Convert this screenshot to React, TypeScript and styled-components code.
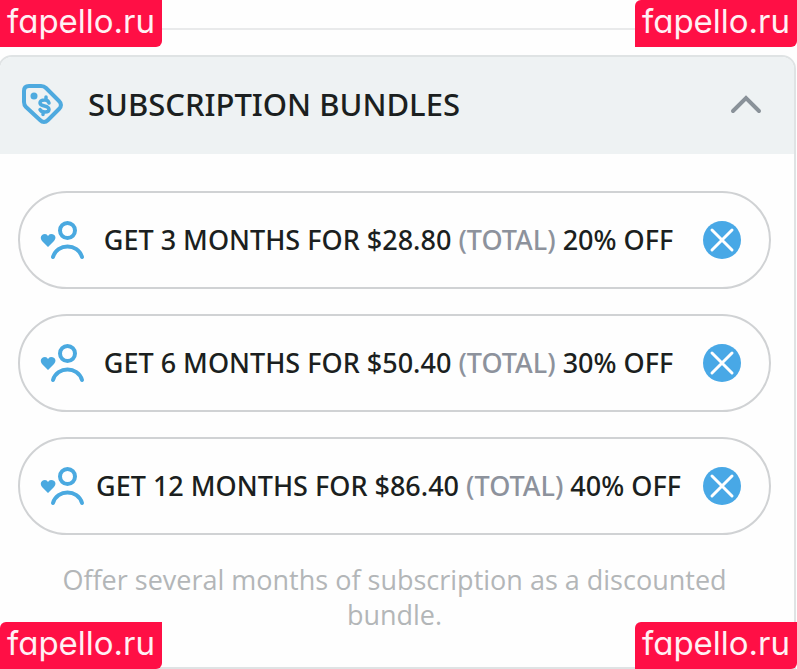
import React from "react";
import styled, { createGlobalStyle } from "styled-components";

const GlobalStyle = createGlobalStyle`
  *, *::before, *::after { box-sizing: border-box; }
  body {
    margin: 0;
    background: #fefefe;
    font-family: "Open Sans", "Noto Sans", sans-serif;
    color: #1b1f20;
    overflow-x: hidden;
  }
`;

const Page = styled.main`
  position: relative;
  overflow: hidden;
`;

const Divider = styled.hr`
  height: 30px;
  margin: 0 0 25px;
  border: 0;
  border-bottom: 2px solid #e9eaeb;
`;

const Panel = styled.section`
  margin: 0 1px 0 -2px;
  border: 2px solid #dfe3e4;
  border-radius: 14px 14px 0 0;
  overflow: hidden;
`;

const PanelHeader = styled.button`
  display: flex;
  align-items: center;
  width: 100%;
  height: 97px;
  padding: 0 32px 4px 21px;
  border: 0;
  background: #eef2f3;
  color: inherit;
  font: inherit;
  text-align: left;
  cursor: pointer;
`;

const PanelTitle = styled.span`
  flex: 1;
  margin-left: 23px;
  font-family: "Noto Sans", "Open Sans", sans-serif;
  font-size: 31px;
  font-weight: 500;
  line-height: 42px;
`;

const PanelBody = styled.div`
  padding: 37px 23px 35px 18px;
`;

const BundleList = styled.ul`
  display: grid;
  gap: 25px;
  margin: 0;
  padding: 0;
  list-style: none;
`;

const BundleRow = styled.li`
  display: flex;
  align-items: center;
  height: 98px;
  padding: 0 28px 0 20px;
  border: 2px solid #d0d2d4;
  border-radius: 49px;
`;

const BundleText = styled.span`
  flex: 1;
  margin-right: 12px;
  font-family: "Noto Sans", "Open Sans", sans-serif;
  font-size: 27px;
  font-weight: 500;
  line-height: 36px;
  text-align: center;
  white-space: nowrap;
`;

const Muted = styled.span`
  color: #8d929c;
`;

const RemoveButton = styled.button`
  display: flex;
  padding: 0;
  border: 0;
  border-radius: 50%;
  background: #48a8e6;
  cursor: pointer;
`;

const Hint = styled.p`
  margin: 27px 40px 0;
  color: #b3b6b8;
  font-size: 27px;
  line-height: 35px;
  text-align: center;
`;

const Badge = styled.a<{ $side: "left" | "right"; $edge: "top" | "bottom" }>`
  position: absolute;
  ${(p) => p.$side}: 0;
  ${(p) => p.$edge}: 0;
  width: 162px;
  height: 47px;
  border-radius: ${(p) => (p.$side === "left" && p.$edge === "top" ? "0 0 6px 0" : "6px 0 6px 0")};
  background: #ff0f45;
  color: #fff0f4;
  font-family: Inter, sans-serif;
  font-feature-settings: "cv11";
  font-size: 33px;
  line-height: 42px;
  text-align: center;
  text-decoration: none;
`;

const TagIcon = () => (
  <svg width="44" height="44" viewBox="0 0 44 44" fill="none" stroke="#4eaadf" strokeLinecap="round" strokeLinejoin="round" aria-hidden="true">
    <path d="M8 4H20Q23 4 25 6L38 19Q42 23 38 27L27 38Q23 42 19 38L5 25Q3 23 3 20V9Q3 4 8 4Z" strokeWidth="4" />
    <circle cx="13" cy="14" r="3.5" fill="#4eaadf" stroke="none" />
    <path d="M28 21Q27 18 24 18Q19 18 19 21Q19 23 23.500 24Q28 25 28 27.500Q28 30 24 30Q20 30 19 27.500M25 15V18M22 30V32.500" strokeWidth="3.500" />
  </svg>
);

const ChevronUp = () => (
  <svg width="32" height="20" viewBox="0 0 32 20" fill="none" stroke="#8a9299" strokeWidth="4" strokeLinecap="round" aria-hidden="true">
    <path d="M3 17L16 4L29 17" />
  </svg>
);

const SubscriberIcon = () => (
  <svg width="46" height="40" viewBox="0 0 46 40" fill="none" aria-hidden="true">
    <path d="M8 27L2 21C-1 17 2 14 5 14Q7 14 8 16Q9 14 11 14C15 14 17 17 14 21Z" fill="#4aa9e0" />
    <circle cx="27.500" cy="10.500" r="7.500" stroke="#4aa9e0" strokeWidth="4" />
    <path d="M13 37C17 23 38 23 42 37" stroke="#4aa9e0" strokeWidth="4" strokeLinecap="round" />
  </svg>
);

const CrossIcon = () => (
  <svg width="38" height="38" viewBox="0 0 38 38" fill="none" stroke="#fff" strokeWidth="3" strokeLinecap="round" aria-hidden="true">
    <path d="M9 9L29 29M29 9L9 29" />
  </svg>
);

const bundles = [
  { months: 3, price: "$28.80", discount: 20 },
  { months: 6, price: "$50.40", discount: 30 },
  { months: 12, price: "$86.40", discount: 40 },
];

export default function App() {
  const [open, setOpen] = React.useState(true);
  const [items, setItems] = React.useState(bundles);

  return (
    <Page>
      <GlobalStyle />
      <Divider />
      <Panel>
        <PanelHeader type="button" aria-expanded={open} onClick={() => setOpen(!open)}>
          <TagIcon />
          <PanelTitle>SUBSCRIPTION BUNDLES</PanelTitle>
          <ChevronUp />
        </PanelHeader>
        {open && (
          <PanelBody>
            <BundleList>
              {items.map((b) => (
                <BundleRow key={b.months}>
                  <SubscriberIcon />
                  <BundleText>
                    GET {b.months} MONTHS FOR {b.price} <Muted>(TOTAL)</Muted> {b.discount}% OFF
                  </BundleText>
                  <RemoveButton
                    type="button"
                    aria-label={`Remove ${b.months} month bundle`}
                    onClick={() => setItems(items.filter((i) => i !== b))}
                  >
                    <CrossIcon />
                  </RemoveButton>
                </BundleRow>
              ))}
            </BundleList>
            <Hint>Offer several months of subscription as a discounted bundle.</Hint>
          </PanelBody>
        )}
      </Panel>
      <Badge href="#" $side="left" $edge="top">fapello.ru</Badge>
      <Badge href="#" $side="right" $edge="top">fapello.ru</Badge>
      <Badge href="#" $side="left" $edge="bottom">fapello.ru</Badge>
      <Badge href="#" $side="right" $edge="bottom">fapello.ru</Badge>
    </Page>
  );
}
